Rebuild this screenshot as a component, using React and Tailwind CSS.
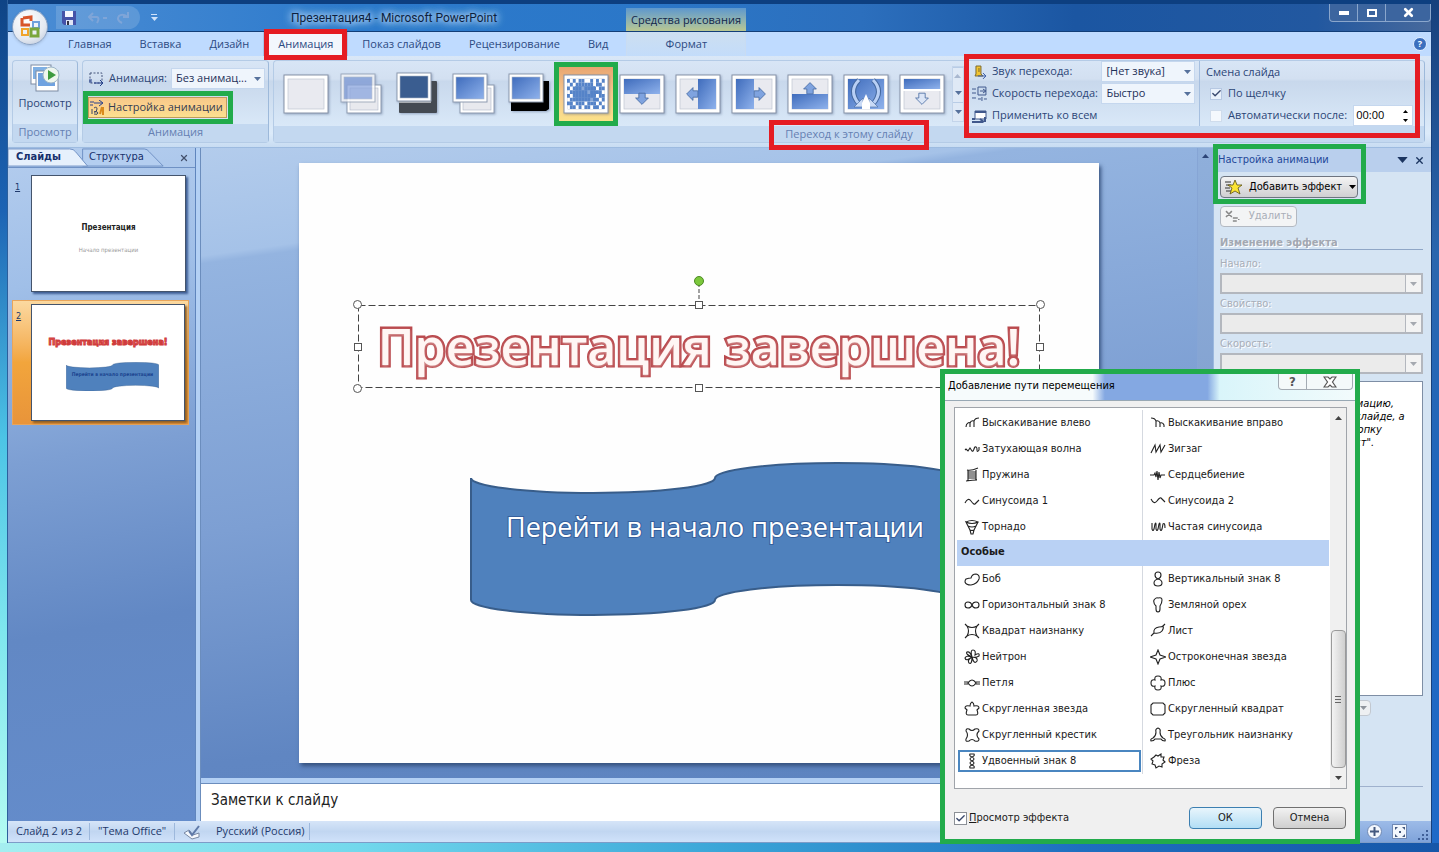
import { Check, X } from 'lucide-react'

const TABS = ['Главная', 'Вставка', 'Дизайн', 'Анимация', 'Показ слайдов', 'Рецензирование', 'Вид']

const UI = 'font-["Open_Sans","Noto_Sans",sans-serif]'
const TAHOMA = 'font-["DejaVu_Sans_Condensed","DejaVu_Sans",sans-serif]'

const TRANSITIONS = [
  'none', 'fade', 'fadeBlack', 'cut', 'cutBlack', 'dissolve',
  'wipeDown', 'wipeLeft', 'wipeRight', 'wipeUp', 'wheel', 'uncover',
]

// pairs of [left column, right column], as listed in the dialog
const LINE_PATHS = [
  [['Выскакивание влево', 'bounceLeft'], ['Выскакивание вправо', 'bounceRight']],
  [['Затухающая волна', 'decay'], ['Зигзаг', 'zigzag']],
  [['Пружина', 'spring'], ['Сердцебиение', 'heartbeat']],
  [['Синусоида 1', 'sine1'], ['Синусоида 2', 'sine2']],
  [['Торнадо', 'tornado'], ['Частая синусоида', 'sineFast']],
]

const SPECIAL_PATHS = [
  [['Боб', 'bean'], ['Вертикальный знак 8', 'eightV']],
  [['Горизонтальный знак 8', 'eightH'], ['Земляной орех', 'peanut']],
  [['Квадрат наизнанку', 'invSquare'], ['Лист', 'leaf']],
  [['Нейтрон', 'neutron'], ['Остроконечная звезда', 'pointStar']],
  [['Петля', 'loop'], ['Плюс', 'plus']],
  [['Скругленная звезда', 'roundStar'], ['Скругленный квадрат', 'roundSquare']],
  [['Скругленный крестик', 'roundCross'], ['Треугольник наизнанку', 'invTriangle']],
  [['Удвоенный знак 8', 'eightDouble'], ['Фреза', 'cutter']],
]

const PATHS = {
  bounceLeft: 'M2 12q0-3 2-4M6 12V8q-1-1-2 0M6 8q1-3 4-2v6M10 6q1-3 5-3',
  bounceRight: 'M1 3q4 0 5 3v6M6 6q3-1 4 2v4M10 8q3-1 4 2v2',
  decay: 'M1 9l1-1 2 2 2-3 2 3q1 1 2-2t2-2q1 0 1 3t2 0V6',
  zigzag: 'M1 12l4-8 1 7 4-7 1 7 4-7',
  spring: 'M3 3q4 1 11-2M4 5h8M4 7h8M4 9h8M4 11h8M2 14q7-1 11-1M4 3v11M12 3v10',
  heartbeat: 'M0 8h4l1-2 1 4 1-6 1 9 1-8 1 6 1-3h4',
  sine1: 'M1 10q3-6 6-2t4 3 4-4',
  sine2: 'M1 6q3 6 6 2t4-3 4 4',
  tornado: 'M2 3q6-3 12 0-6 3-12 0l2 4q4 2 8 0l2-4M4 7l2 4q2 1 4 0l2-4M6 11l1 4h2l1-4',
  sineFast: 'M2 4v6q1 3 2 0l1-5q1-2 1 0v5q1 3 2 0l1-5q1-2 1 0v5q1 3 2 0l1-5q2-2 2 4',
  bean: 'M2 8q3-1 5-1 1-4 5-4 4 1 3 5-2 5-8 6-5 0-6-3 0-2 1-3z',
  eightV: 'M8 8Q5 7 5 4 5 1 8 1t3 3q0 3-3 4-4 1-4 4 0 3 4 3t4-3q0-3-4-4z',
  eightH: 'M8 8Q7 5 4 5T1 8t3 3 4-3q1-3 4-3t3 3-3 3-4-3z',
  peanut: 'M6 9Q3 6 4 3q2-3 4-2 4-1 4 2 0 3-2 6v3q0 3-2 3t-2-3z',
  invSquare: 'M3 3q5 3 10 0-3 5 0 10-5-3-10 0 3-5 0-10zM3 3L1 1M13 3l2-2M3 13l-2 2M13 13l2 2',
  leaf: 'M1 13l3-3q-1-5 5-6 3 0 4-1l2-2M4 10q6 1 8-2 2-3 1-5',
  neutron: 'M8 8Q6 1 9 1t2 5q5-3 4 1-3 2-7 1 6 0 5 4-3 4-5-4 0 8-3 6-2-3 3-6-6 5-7 1 1-3 7-1-7-3-5-5 3-1 5 5z',
  loop: 'M0 7h5M11 7h5M0 9h5M11 9h5M4 8q4-6 8 0-4 6-8 0z',
  pointStar: 'M0 8l6-2 2-5 2 5 6 2-6 2-2 5-2-5z',
  plus: 'M5 5q-1-4 3-4t3 4q4-1 4 3t-4 3q1 4-3 4t-3-4q-4 1-4-3t4-3z',
  roundStar: 'M8 1q2 1 2 4 5-1 5 2l-2 2q2 5-1 5H4q-3 0-1-5L1 7q0-3 5-2 0-3 2-4z',
  roundSquare: 'M3 2h10l2 2v8l-2 2H3l-2-2V4z',
  roundCross: 'M2 4q0-3 3-2 3 3 6 0 4-1 4 2-4 4 0 8 0 3-4 2-3-3-6 0-4 1-3-2 3-4 0-8z',
  invTriangle: 'M8 1q3 1 2 4 0 4 3 6 3 1 2 3-3 0-4-2H5q-1 2-4 2-1-2 2-3 3-2 3-6Q5 2 8 1z',
  eightDouble: 'M8 4Q5 3 6 1h4q1 2-2 3-4 2 0 4 4-2 0-4M8 8q-4 2 0 4 4-2 0-4M8 12q-3 1-2 3h4q1-2-2-3',
  cutter: 'M6 2l2 1 3-2v3l3 0-1 3 2 2-3 2v3l-3-1-3 2-1-3-3-1 1-3-2-2 3-2z',
}

function PathIcon({ name }) {
  return (
    <svg viewBox="0 0 16 16" className="w-4 h-4 shrink-0" fill="none" stroke="#222" strokeWidth="1.1">
      <path d={PATHS[name]} />
    </svg>
  )
}

// coloured marker frame around a part of the window
function Marker({ className }) {
  return <span className={`absolute pointer-events-none z-10 border-[5px] ${className}`} />
}

function Caret({ className = 'text-[#56719c]' }) {
  return (
    <svg viewBox="0 0 7 4" className={`w-[7px] h-1 shrink-0 pointer-events-none ${className}`} fill="currentColor">
      <path d="M0 0h7L3.5 4z" />
    </svg>
  )
}

function TitleBar() {
  return (
    <header className="flex h-8 shrink-0 border-t-4 border-[#0d3f80] bg-[linear-gradient(90deg,#4c8dd4,#2c7acc_25%,#2b77c8_45%,#2c6fbd_60%,#1b56a2_75%,#2258a0_92%,#47699c)] border-b border-b-[#123e78]">
      <div className="flex items-center gap-3 ml-12 my-0.5 pl-1.5 w-[84px] rounded-r-full bg-white/15">
        <svg viewBox="0 0 14 14" className="w-3.5 h-3.5">
          <path d="M0 0h14v14H2L0 12z" fill="#4452a8" />
          <path d="M3 0h8v6H3z" fill="#f4f6ff" />
          <path d="M4 9h7v5H4z" fill="#dfe5f5" />
          <path d="M5 10h2v4H5z" fill="#334" />
        </svg>
        <svg viewBox="0 0 46 12" className="w-[46px] h-3" fill="none" stroke="#7fa5d8" strokeWidth="2">
          <path d="M1 5h8q3 1 0 6M5 1L1 5l4 4" />
          <path d="M15 6h4" />
          <path d="M34 11q-6-3-3-7 3-3 9 1M40 0v5h-5" />
        </svg>
      </div>
      <div className="flex flex-col items-center justify-center gap-0.5 w-4 ml-1.5 text-[#cfe2fa]">
        <span className="w-1.5 h-px bg-current" />
        <Caret className="text-[#cfe2fa]" />
      </div>
      <div className="relative flex-1">
        <h1 className='absolute left-[129px] top-1 text-[12px] leading-5 text-[#0d1f3d] whitespace-nowrap [text-shadow:0_0_6px_#bfdcfb,0_0_8px_#bfdcfb,0_0_10px_#bfdcfb] font-["Roboto","Noto_Sans",sans-serif]'>
          Презентация4 - Microsoft PowerPoint
        </h1>
        <div className={`absolute left-[464px] top-1 bottom-0 w-[120px] text-center text-[11px] leading-6 text-[#12264a] bg-gradient-to-b from-[#5d97cd] to-[#b9c790] ${UI}`}>
          Средства рисования
        </div>
      </div>
      <div className="flex h-[18px] text-white border border-t-0 border-[#8aa6cc] rounded-b-sm bg-[#3c659f]">
        <button aria-label="Свернуть" className="w-7 flex items-center justify-center border-r border-[#8aa6cc]">
          <span className="w-2.5 h-1 bg-white" />
        </button>
        <button aria-label="Развернуть" className="w-7 flex items-center justify-center border-r border-[#8aa6cc]">
          <span className="w-2.5 h-2 border-2 border-white" />
        </button>
        <button aria-label="Закрыть" className="w-11 flex items-center justify-center">
          <X size={13} strokeWidth={5} />
        </button>
      </div>
    </header>
  )
}

function OfficeButton() {
  return (
    <button aria-label="Office" className="absolute left-3 top-[9px] z-20 w-9 h-9 rounded-full border border-[#8ba3c4] bg-[radial-gradient(circle_at_40%_30%,#ffffff,#e4e9f1_60%,#b4c1d6)] shadow flex items-center justify-center">
      <svg viewBox="0 0 24 24" className="w-6 h-6" fill="none" strokeWidth="3">
        <path d="M5 3l8-1v4M12 10H4V3" stroke="#d8552a" />
        <path d="M15 7h6v6h-6z" stroke="#6fa0dc" strokeWidth="2" />
        <path d="M4 14h6v6H4z" stroke="#f0a42c" strokeWidth="2" />
        <path d="M13 14h7v7h-7z" stroke="#7aa63c" />
      </svg>
    </button>
  )
}

function RibbonTabs() {
  return (
    <nav className={`flex items-stretch h-6 shrink-0 pl-[46px] bg-[#bfdbff] text-[11px] text-[#2c4a82] ${UI}`}>
      {TABS.map(tab => (
        <button
          key={tab}
          className={`relative px-3.5 ${tab === 'Анимация' ? 'bg-[#f3f7fd] border border-b-0 border-[#a9c3e4]' : ''}`}
        >
          {tab}
          {tab === 'Анимация' && <Marker className="border-[#e51c23] left-0 right-0 -top-1 -bottom-1" />}
        </button>
      ))}
      <button className="ml-1 w-[120px] border-x border-[#c9dcf2] bg-gradient-to-b from-[#cddff0] to-[#c3dcfa]">Формат</button>
      <button aria-label="Справка" className="ml-auto mr-1 my-auto w-3.5 h-3.5 rounded-full bg-[#3b6fbe] border border-[#e3efff] text-white text-[9px] leading-3 font-bold">
        ?
      </button>
    </nav>
  )
}

function Group({ label, className = '', children }) {
  return (
    <section className={`flex flex-col rounded-sm border border-[#b4cbe6] border-r-[#9db9da] ${className}`}>
      <div className="flex-1 flex">{children}</div>
      <div className="relative h-[18px] text-center text-[11px] leading-4 text-[#6580b2] bg-[#c3d8f0]">{label}</div>
    </section>
  )
}

function Sheet({ x, y, fill }) {
  return (
    <g>
      <rect x={x} y={y} width="34" height="28" fill="#fff" stroke="#8e9bb0" />
      <rect x={x + 3} y={y + 3} width="28" height="22" fill={fill} stroke="#aeb8c8" strokeWidth=".6" />
    </g>
  )
}

const DISSOLVE = [
  '1010110010101', '0101111110110', '1011101111011', '0111111011110',
  '1011111111011', '0111111101101', '1101110111010', '0110101101101',
]

function Transition({ kind }) {
  const arrow = 'M-4 0h-4l8 8 8-8h-4v-6h-8z'
  const full = (
    <g>
      <rect x="1" y="3" width="44" height="38" fill="#fff" stroke="#8793a8" />
      <rect x="5" y="7" width="36" height="30" fill="#e9eaf0" stroke="#c0c6d2" strokeWidth=".7" />
    </g>
  )
  const arrowProps = { d: arrow, fill: '#7fa3df', stroke: '#44689f' }
  return (
    <svg viewBox="0 0 46 44" className="w-[46px] h-11 drop-shadow-[1px_1px_1px_rgba(60,80,120,0.4)]">
      <defs>
        <linearGradient id="tblue" x1="0" y1="0" x2="1" y2="1">
          <stop offset="0" stopColor="#3f6cbc" />
          <stop offset="1" stopColor="#8fb2ec" />
        </linearGradient>
      </defs>
      {kind === 'none' && full}
      {kind === 'fade' && <><Sheet x={8} y={13} fill="#e8e9ee" /><g opacity=".75"><Sheet x={2} y={2} fill="#8aa5de" /></g></>}
      {kind === 'fadeBlack' && <><rect x="4" y="9" width="38" height="32" rx="1" fill="#444a52" /><path d="M4 27h32v4H4z" fill="#a9adb2" /><Sheet x={2} y={1} fill="#3a5d90" /></>}
      {kind === 'cut' && <><Sheet x={9} y={13} fill="#e8e9ee" /><Sheet x={2} y={2} fill="url(#tblue)" /></>}
      {kind === 'cutBlack' && <><path d="M36 9h6v28l-3 2H4V29h32z" fill="#000" /><Sheet x={2} y={2} fill="url(#tblue)" /></>}
      {kind === 'dissolve' && (
        <>
          {full}
          <rect x="5" y="7" width="36" height="30" fill="#fff" />
          {DISSOLVE.map((row, r) =>
            [...row].map((c, i) =>
              c === '1' ? <rect key={`${r}-${i}`} x={4 + i * 2.9} y={7 + r * 3.75} width="2.9" height="3.75" fill="#5583c8" /> : null
            )
          )}
          <rect x="12" y="14" width="20" height="15" fill="#5583c8" opacity=".7" />
        </>
      )}
      {kind === 'wipeDown' && <>{full}<rect x="5" y="7" width="36" height="15" fill="url(#tblue)" /><path {...arrowProps} transform="translate(23 26) scale(.8)" /></>}
      {kind === 'wipeLeft' && <>{full}<rect x="23" y="7" width="18" height="30" fill="url(#tblue)" /><path {...arrowProps} transform="translate(18 22) rotate(90) scale(.8)" /></>}
      {kind === 'wipeRight' && <>{full}<rect x="5" y="7" width="18" height="30" fill="url(#tblue)" /><path {...arrowProps} transform="translate(28 22) rotate(-90) scale(.8)" /></>}
      {kind === 'wipeUp' && <>{full}<rect x="5" y="22" width="36" height="15" fill="url(#tblue)" /><path {...arrowProps} transform="translate(23 17) rotate(180) scale(.8)" /></>}
      {kind === 'uncover' && <>{full}<rect x="5" y="7" width="36" height="10" fill="url(#tblue)" /><path d="M2 18h42" stroke="#fff" strokeWidth="2" /><path {...arrowProps} fill="#dbe5f6" transform="translate(23 26) scale(.8)" /></>}
      {kind === 'wheel' && (
        <>
          {full}
          <rect x="5" y="7" width="36" height="30" fill="url(#tblue)" />
          <path d="M16 8q-11 11 0 24M30 8q11 11 0 24" fill="none" stroke="#44689f" strokeWidth="5" />
          <path d="M16 8q-11 11 0 24M30 8q11 11 0 24" fill="none" stroke="#b8cff5" strokeWidth="3" />
          <path d="M11 35h9v-9zM35 35h-9v-9z" fill="#c9daf6" stroke="#44689f" strokeWidth=".6" />
          <path d="M23 22l4 9v6h-8v-6z" fill="#fff" />
        </>
      )}
    </svg>
  )
}

function RibbonSelect({ id, value, className }) {
  return (
    <span className={`relative inline-flex items-center ${className}`}>
      <select id={id} defaultValue={value} className="appearance-none w-full h-[21px] pl-1 pr-4 bg-[#eff5fc] border border-[#c5d7ee] text-[11px] text-[#1d3058]">
        <option>{value}</option>
      </select>
      <span className="absolute right-1"><Caret /></span>
    </span>
  )
}

function MotionIcon() {
  return (
    <svg viewBox="0 0 17 16" className="w-[17px] h-4 shrink-0" fill="none" stroke="#47567c">
      <path d="M2 2h12v10H2z" strokeDasharray="2 1.5" />
      <path d="M1 9h3M1 11h3M6 12h9M12 9l3 3-3 3" stroke="#26418c" />
    </svg>
  )
}

function Ribbon() {
  return (
    <div className={`flex gap-1 h-[92px] shrink-0 pl-1 pr-1.5 pt-1 pb-1 text-[11px] text-[#2c4677] bg-[linear-gradient(#d9e7f7,#d3e0f1_25%,#c8d8ec_28%,#dcebfa_85%,#c8dcf2)] border-b border-[#9dbbe0] ${UI}`}>
      <Group label="Просмотр" className="w-[66px]">
        <button className="w-full flex flex-col items-center pt-0.5">
          <svg viewBox="0 0 30 30" className="w-[30px] h-[30px]">
            <rect x="1" y="2" width="20" height="19" fill="#fff" stroke="#7d8ba3" />
            <rect x="3" y="4" width="14" height="12" fill="#7fb0e4" />
            <rect x="6" y="8" width="22" height="20" fill="#fff" stroke="#7d8ba3" />
            <rect x="8" y="10" width="17" height="13" fill="#6fa2e0" />
            <circle cx="21" cy="12" r="8" fill="#eef6ee" stroke="#9db5c8" />
            <path d="M18 7l8 5-8 5z" fill="#3e9b3e" />
          </svg>
          <span className="leading-5">Просмотр</span>
        </button>
      </Group>

      <Group label="Анимация" className="w-[187px]">
        <div className="flex flex-col gap-2 pt-[7px] pl-[5px] w-full">
          <div className="flex items-center h-[21px]">
            <MotionIcon />
            <label htmlFor="anim" className="ml-1 w-[62px]">Анимация:</label>
            <RibbonSelect id="anim" value="Без анимац..." className="w-[94px]" />
          </div>
          <button className="relative flex items-center gap-0.5 h-[21px] w-[139px] bg-gradient-to-b from-[#f7c98a] via-[#fcd38d] to-[#fbe08f] border border-[#c09a5a] text-[#333b52] whitespace-nowrap">
            <svg viewBox="0 0 17 16" className="w-[17px] h-4 shrink-0" fill="none" stroke="#3b4668">
              <path d="M1 2h4M1 5h3M5 3h8M10 0l4 3-4 3" stroke="#26418c" />
              <path d="M5 8q3-2 3 1t-3 3q4-1 4 1t-4 1M3 9v5" />
              <path d="M13 7l-2 7M14 7v8" stroke="#d88a1c" strokeWidth="2" />
            </svg>
            Настройка анимации
            <Marker className="border-[#22ab4b] -inset-y-[7px] -left-1.5 -right-[7px]" />
          </button>
        </div>
      </Group>

      <Group
        className="flex-1"
        label={
          <span className="relative inline-block">
            Переход к этому слайду
            <Marker className="border-[#e51c23] -inset-x-4 -top-1.5 -bottom-2" />
          </span>
        }
      >
        <div className="flex items-center pl-1">
          {TRANSITIONS.map(kind => (
            <button
              key={kind}
              aria-label={kind}
              className={`relative w-14 h-14 flex items-center justify-center ${
                kind === 'dissolve' ? 'bg-gradient-to-b from-[#e8a571] via-[#f7c98f] to-[#fbe189] border border-[#b59a68]' : ''
              }`}
            >
              <Transition kind={kind} />
              {kind === 'dissolve' && <Marker className="border-[#22ab4b] -inset-[5px]" />}
            </button>
          ))}
          <div className="flex flex-col w-3 ml-0.5 divide-y divide-[#b8cce6] border border-[#c3d4ea] bg-[#dfe9f6]">
            <button aria-label="Выше" className="h-[18px] flex items-center justify-center rotate-180"><Caret className="text-[#a9b8d0]" /></button>
            <button aria-label="Ниже" className="h-[18px] flex items-center justify-center"><Caret /></button>
            <button aria-label="Ещё" className="h-[18px] flex items-center justify-center"><Caret /></button>
          </div>
        </div>

        <div className="relative flex flex-1 pl-2">
          <div className="flex flex-col gap-px w-[223px]">
            <div className="flex items-center h-[21px]">
              <svg viewBox="0 0 16 16" className="w-4 h-4 mr-1" fill="#f3c532" stroke="#7a6a30">
                <path d="M4 2h5v8l2 2H3l1-2z" />
                <path d="M7 4v4" />
                <path d="M6 12h8M11 9l3 3-3 3" fill="none" stroke="#3b5da6" />
              </svg>
              <label htmlFor="sound" className="w-[110px]">Звук перехода:</label>
              <RibbonSelect id="sound" value="[Нет звука]" className="w-[94px]" />
            </div>
            <div className="flex items-center h-[21px]">
              <svg viewBox="0 0 16 16" className="w-4 h-4 mr-1" fill="none" stroke="#40588c">
                <path d="M0 3h4M0 7h4M0 12h4M6 1h8v8H6zM8 5h6M11 3l3 2-3 2M6 13h3M12 13h3M10 11v4" />
              </svg>
              <label htmlFor="speed" className="w-[110px] whitespace-nowrap">Скорость перехода:</label>
              <RibbonSelect id="speed" value="Быстро" className="w-[94px]" />
            </div>
            <button className="flex items-center gap-1 h-[21px]">
              <svg viewBox="0 0 16 16" className="w-4 h-4" fill="none" stroke="#40588c">
                <path d="M3 3h11v8H3z" fill="#fff" />
                <path d="M3 4h11M0 11h3M0 14h11M8 11l4 3M13 9v5" strokeWidth="2" />
              </svg>
              Применить ко всем
            </button>
          </div>
          <div className="flex flex-col gap-px pl-2.5 ml-1 border-l border-[#a6bfdf] flex-1 max-w-[214px]">
            <span className="leading-[21px] -ml-1">Смена слайда</span>
            <label className="flex items-center gap-1.5 h-[21px]">
              <span className="relative flex">
                <input type="checkbox" defaultChecked className="appearance-none w-3 h-3 bg-[#e9f1fb] border border-[#b6c8e2]" />
                <Check size={11} strokeWidth={3} className="absolute left-px top-0 text-[#38486e] pointer-events-none" />
              </span>
              По щелчку
            </label>
            <div className="flex items-center gap-1.5 h-[21px]">
              <input id="auto" type="checkbox" className="appearance-none w-3 h-3 bg-[#f4f8fd] border border-[#cfdcec]" />
              <label htmlFor="auto" className="whitespace-nowrap">Автоматически после:</label>
              <span className="flex items-center flex-1 h-[21px] bg-white border border-[#c5d7ee]">
                <input aria-label="Время" defaultValue="00:00" className="w-10 pl-0.5 text-[11px] text-black bg-transparent" />
                <span className="flex flex-col gap-1.5 ml-auto mr-1">
                  <svg viewBox="0 0 5 3" className="w-[5px] h-[3px]"><path d="M0 3h5L2.5 0z" /></svg>
                  <svg viewBox="0 0 5 3" className="w-[5px] h-[3px]"><path d="M0 0h5L2.5 3z" /></svg>
                </span>
              </span>
            </div>
          </div>
          <Marker className="border-[#e51c23] left-0 right-1 -top-[7px] -bottom-[12px]" />
        </div>
      </Group>
    </div>
  )
}

// wave shaped banner, used on the slide and in its thumbnail
function Banner({ className }) {
  return (
    <svg viewBox="0 0 490 154" className={className} fill="#4f81bd" stroke="#385d8a" strokeWidth="2">
      <path d="M1 16A122 15 0 0 0 245 16A122 15 0 0 1 489 16V138A122 15 0 0 0 245 138A122 15 0 0 1 1 138Z" />
    </svg>
  )
}

function SlidesPane() {
  return (
    <aside className={`w-[188px] shrink-0 flex flex-col border-r border-[#5f85bd] bg-[linear-gradient(170deg,#b4cdee,#a0bfe8_20%,#7d9fd3_45%,#6288c4_70%,#648ccb)] ${TAHOMA}`}>
      <div className="relative flex items-center h-5 shrink-0 border-b border-[#6f91c4]">
        <svg viewBox="0 0 188 20" preserveAspectRatio="none" className="absolute inset-0 w-full h-full">
          <path d="M75 1h62q3 0 5 3l14 15H75z" fill="#b4cef0" stroke="#6f91c4" />
          <path d="M0 1h62q4 0 6 3l12 15H0z" fill="#e6f0fc" stroke="#6f91c4" />
        </svg>
        <button className="relative ml-2 w-[73px] text-left text-[11px] font-bold text-[#17306c]">Слайды</button>
        <button className="relative text-[11px] text-[#17306c]">Структура</button>
        <button aria-label="Закрыть область" className="relative ml-auto mr-1.5 text-[#44506c]"><X size={10} strokeWidth={3} /></button>
      </div>
      <ol className="flex flex-col pt-1 pl-1 pr-1.5 text-[9px] text-[#203a6c]">
        <li className="flex gap-2 p-[3px] pb-2">
          <span className="w-2 pt-1.5 underline">1</span>
          <div className="flex flex-col items-center justify-center gap-3 w-[155px] h-[117px] bg-white border border-[#44546c] shadow-[2px_2px_2px_#3f5f94]">
            <p className="text-[8px] leading-3 font-bold text-[#222] pt-2">Презентация</p>
            <p className="text-[6px] leading-2 text-[#999]">Начало презентации</p>
          </div>
        </li>
        <li className="flex gap-2 p-[3px] bg-gradient-to-b from-[#fbd9a0] via-[#f2a53c] to-[#e8943a] border border-[#e9a55a]">
          <span className="w-[7px] pt-1.5 underline">2</span>
          <div className="relative w-[155px] h-[117px] bg-white border border-[#44546c] shadow-[2px_2px_2px_#8f5f24]">
            <p className="pt-[31px] text-center text-[9px] leading-3 font-bold text-[#ee6a66] [-webkit-text-stroke:1px_#cf3b3b] whitespace-nowrap">Презентация завершена!</p>
            <div className="relative w-[93px] ml-[34px] mt-3.5">
              <Banner className="w-full" />
              <p className="absolute inset-x-0 top-2 text-center text-[5px] leading-2 font-bold text-[#1c4590] whitespace-nowrap">Перейти в начало презентации</p>
            </div>
          </div>
        </li>
      </ol>
    </aside>
  )
}

const HANDLES = [
  'rounded-full -left-[5px] -top-[5px]',
  'rounded-full -right-[5px] -top-[5px]',
  'rounded-full -left-[5px] -bottom-[5px]',
  'rounded-full -right-[5px] -bottom-[5px]',
  'left-1/2 -translate-x-1/2 -top-1',
  'left-1/2 -translate-x-1/2 -bottom-1',
  'top-1/2 -translate-y-1/2 -left-1',
  'top-1/2 -translate-y-1/2 -right-1',
]

function Slide() {
  return (
    <div className="relative w-[800px] h-[600px] shrink-0 bg-[#fefefe] shadow-[2px_3px_4px_#36527f]">
      <div className="absolute left-[59px] top-[142px] w-[682px] h-[83px]">
        <svg className="absolute inset-0 w-full h-full overflow-visible" fill="none" stroke="#444">
          <rect x="0.5" y="0.5" width="681" height="82" strokeDasharray="7 3" />
          <path d="M341 0v-20" strokeDasharray="4 2" />
        </svg>
        <span className="absolute left-1/2 -translate-x-1/2 -top-[29px] w-2.5 h-2.5 rounded-full bg-[#7cc83c] border border-[#4c8a24]" />
        {HANDLES.map(h => (
          <span key={h} className={`absolute bg-white border border-[#555] ${h} ${h.includes('rounded') ? 'w-[9px] h-[9px]' : 'w-2 h-2'}`} />
        ))}
        <p className='relative h-full flex items-center justify-center whitespace-nowrap text-[50px] font-semibold text-[#fff6f4] [paint-order:stroke_fill] [-webkit-text-stroke:5px_#b9484c] [text-shadow:0_1px_3px_#dba5a5] font-["Open_Sans","Noto_Sans",sans-serif]'>
          Презентация завершена!
        </p>
      </div>
      <div className="absolute left-[171px] top-[299px] w-[490px]">
        <Banner className="w-full block" />
        <p className='absolute left-0 top-[43px] w-full text-center whitespace-nowrap text-[27px] leading-11 text-white [paint-order:stroke_fill] [-webkit-text-stroke:2px_#365f9c] font-["Open_Sans","Noto_Sans",sans-serif]'>
          Перейти в начало презентации
        </p>
      </div>
    </div>
  )
}

function Editor() {
  return (
    <main className="flex-1 min-w-0 flex flex-col">
      <div className="flex-1 flex bg-[linear-gradient(172deg,#b3ccec,#a5c2e8_14%,#94b4e0_15%,#7d9fd3_50%,#6086c2_80%,#5c83bf)]">
        <div className="flex-1 min-w-0 flex items-center justify-center overflow-hidden">
          <Slide />
        </div>
        <div className="w-4 shrink-0 flex justify-center pt-1.5 bg-[linear-gradient(#8fafdb,#7391c2)] border-l border-[#86a5d5]">
          <span className="rotate-180 h-fit flex"><Caret className="text-[#2c4477]" /></span>
        </div>
      </div>
      <div className="h-1.5 shrink-0 bg-[#b3d0f4] border-b border-[#6b8dbd]" />
      <textarea
        aria-label="Заметки"
        defaultValue="Заметки к слайду"
        className={`h-[37px] shrink-0 resize-none bg-white px-2.5 py-1 text-[15px] leading-6 text-[#222] ${TAHOMA}`}
      />
    </main>
  )
}

function PaneSelect({ id, label }) {
  return (
    <div className="flex flex-col">
      <label htmlFor={id} className="leading-[19px] text-[#a9aeb8] [text-shadow:1px_1px_0_#fff]">{label}</label>
      <span className="relative flex">
        <select id={id} disabled className="appearance-none w-full h-[21px] bg-[#ebebeb] border-2 border-[#b3b7be]" />
        <span className="absolute right-0.5 top-0.5 w-4 h-[17px] flex items-center justify-center bg-[#f3f3f3] border-l border-[#b3b7be]">
          <Caret className="text-[#a5a9b0]" />
        </span>
      </span>
    </div>
  )
}

function AnimationPane() {
  return (
    <aside className={`relative w-[218px] shrink-0 flex flex-col bg-[#d5e4f3] border-l border-[#9bb8de] text-[11px] ${TAHOMA}`}>
      <div className="flex items-center gap-2 h-6 shrink-0 pl-1 pr-1.5 bg-[#b9cfed] text-[#24489a]">
        <h2 className="flex-1">Настройка анимации</h2>
        <Caret className="text-[#1c3560] scale-150" />
        <button aria-label="Закрыть область" className="text-[#1c3560]"><X size={11} strokeWidth={3} /></button>
      </div>
      <Marker className="border-[#22ab4b] -left-px -top-1 w-[153px] h-[60px]" />
      <div className="flex-1 flex flex-col pl-1.5 pr-2 pt-1">
        <button className="flex items-center gap-[7px] h-[22px] w-[138px] px-1 border border-[#6d7480] rounded-sm bg-gradient-to-b from-[#f4f4f4] to-[#cfcfd2] text-black whitespace-nowrap">
          <svg viewBox="0 0 17 16" className="w-[17px] h-4 shrink-0">
            <path d="M0 3h6M1 6h5M0 9h5M1 12h5" stroke="#333" />
            <path d="M10 1l2 5h5l-4 3 2 6-5-3-5 3 2-6-4-3h5z" fill="#fbe434" stroke="#5c5210" strokeWidth=".8" />
          </svg>
          Добавить эффект
          <Caret className="text-black" />
        </button>
        <button disabled className="flex items-center gap-2 mt-2 h-[21px] w-[77px] px-1 border border-[#b3b9c2] rounded-sm bg-[#f3f4f5] text-[#a9aeb8]">
          <svg viewBox="0 0 16 14" className="w-4 h-3.5" stroke="#888" fill="none" strokeWidth="1.5">
            <path d="M1 1l6 6M7 1L1 7M8 8h5M8 11h4M14 9v1" />
          </svg>
          Удалить
        </button>
        <h3 className="mt-2 leading-[15px] h-[15px] border-b border-[#8fa6c6] font-bold text-[#a3a8b2] [text-shadow:1px_1px_0_#fff]">Изменение эффекта</h3>
        <div className="flex flex-col mt-1">
          <PaneSelect id="start" label="Начало:" />
          <PaneSelect id="prop" label="Свойство:" />
          <PaneSelect id="paneSpeed" label="Скорость:" />
        </div>
        <div className="mt-[7px] h-[315px] border border-[#7e8ea5] bg-white pt-[15px] text-center italic leading-[13px] text-black whitespace-nowrap">
          Чтобы добавить анимацию,<br />
          выделите элемент на слайде, а<br />
          затем нажмите кнопку<br />
          "Добавить эффект".
        </div>
        <div className="flex justify-end pr-[52px] mt-1">
          <button aria-label="Ниже" className="w-4 h-4 rounded-sm border border-[#c2c8d0] bg-[#eef0f2] flex items-center justify-center"><Caret className="text-[#8f949c]" /></button>
        </div>
        <div className="mt-auto mb-[34px] border-t border-[#9fb1cd]" />
      </div>
    </aside>
  )
}

function PathCell({ item, selected }) {
  const [label, icon] = item
  return (
    <button
      className={`flex items-center gap-0.5 flex-1 min-w-0 px-1 my-0.5 mx-px text-left whitespace-nowrap border-2 ${
        selected ? 'border-[#4a86c0]' : 'border-transparent'
      }`}
    >
      <PathIcon name={icon} />
      <span>{label}</span>
    </button>
  )
}

function PathRows({ rows }) {
  return rows.map(([left, right]) => (
    <div key={left[0]} className="flex h-[26px]">
      <div className="flex w-[186px] border-r border-[#d5d9e0]"><PathCell item={left} selected={left[1] === 'eightDouble'} /></div>
      <div className="flex flex-1"><PathCell item={right} /></div>
    </div>
  ))
}

function MotionPathDialog() {
  return (
    <div role="dialog" aria-label="Добавление пути перемещения" className={`absolute right-[79px] bottom-2 z-30 w-[420px] flex flex-col border-[5px] border-[#22ab4b] bg-[#f0f0f0] text-[11px] text-[#1a1a1a] ${TAHOMA}`}>
      <div className="flex items-start h-[27px] pl-[3px] bg-[linear-gradient(90deg,#f6fbfc_36%,#84a8e2_39%,#84a8e2_64%,#d9f5fa_67%,#f2fbfc)] border-b border-[#98a8b4]">
        <h2 className="flex-1 leading-6 text-black">Добавление пути перемещения</h2>
        <div className="flex h-4 mr-0.5 border border-t-0 border-[#a3abb3] rounded-b bg-[#f4f9fa]">
          <button aria-label="Справка" className="w-7 border-r border-[#a3abb3] text-[13px] font-bold leading-3 text-[#555]">?</button>
          <button aria-label="Закрыть" className="w-[45px] flex items-center justify-center">
            <svg viewBox="0 0 14 12" className="w-3.5 h-3" fill="#fff" stroke="#555" strokeWidth="1.200">
              <path d="M1 1h4l2 2 2-2h4L9.500 6l3.500 5H9L7 9l-2 2H1l3.500-5z" />
            </svg>
          </button>
        </div>
      </div>
      <div className="flex ml-[9px] mr-2 mt-1.5 h-[382px] border border-[#a0a4aa] bg-white">
        <div className="flex-1 pl-0.5 pt-0.5">
          <PathRows rows={LINE_PATHS} />
          <h3 className="h-[26px] pl-1 leading-6 font-bold bg-[#b9d1f4]">Особые</h3>
          <PathRows rows={SPECIAL_PATHS} />
        </div>
        <div className="flex flex-col items-center w-4 ml-px bg-[#f0f0f0] py-2">
          <span className="rotate-180 flex"><Caret className="text-[#444]" /></span>
          <div className="mt-auto mb-2 w-[15px] h-[138px] border border-[#9a9a9a] rounded-sm bg-gradient-to-r from-[#f3f3f3] to-[#cfcfcf] flex flex-col items-center justify-center gap-0.5">
            <span className="w-1.5 h-px bg-[#666]" />
            <span className="w-1.5 h-px bg-[#666]" />
            <span className="w-1.5 h-px bg-[#666]" />
          </div>
          <Caret className="text-[#444]" />
        </div>
      </div>
      <div className="flex items-center gap-[11px] px-[9px] pt-[18px] pb-2.5">
        <label className="flex items-center gap-0.5 flex-1">
          <span className="relative flex">
            <input type="checkbox" defaultChecked className="appearance-none w-[13px] h-[13px] bg-white border border-[#8c9096]" />
            <Check size={11} strokeWidth={3} className="absolute left-px top-px text-[#3b4a6e] pointer-events-none" />
          </span>
          <span><u>П</u>росмотр эффекта</span>
        </label>
        <button className="w-[73px] h-[22px] border border-[#3c7fb1] rounded-sm bg-gradient-to-b from-[#e8f5fc] to-[#b2def5]">ОК</button>
        <button className="w-[73px] h-[22px] border border-[#707070] rounded-sm bg-gradient-to-b from-[#f2f2f2] to-[#cfcfcf]">Отмена</button>
      </div>
    </div>
  )
}

function StatusBar() {
  return (
    <footer className={`flex items-center h-[22px] shrink-0 text-[11px] text-[#1f3a6c] bg-gradient-to-b from-[#d6e5f8] via-[#c1d6f1] to-[#d0e2fa] border-b border-[#7d9cc8] ${UI}`}>
      <span className="w-[82px] pl-2 border-r border-[#9db8dc] whitespace-nowrap">Слайд 2 из 2</span>
      <span className="w-[85px] pl-2 border-r border-[#9db8dc] whitespace-nowrap">"Тема Office"</span>
      <span className="w-[41px] pl-2">
        <svg viewBox="0 0 18 16" className="w-[18px] h-4" fill="#f5f8fd" stroke="#7888a4">
          <path d="M1 9l5-3 4 5 6-2v4l-7 2z" />
          <path d="M6 7l3 4 7-9" fill="none" stroke="#5f79a8" strokeWidth="2" />
        </svg>
      </span>
      <span className="pr-1 border-r border-[#9db8dc] whitespace-nowrap">Русский (Россия)</span>
      <span className="ml-auto flex items-center gap-2.5 h-full pl-3 pr-0.5 bg-gradient-to-b from-[#9dbbe8] to-[#7fa3da]">
        <button aria-label="Увеличить" className="w-[15px] h-[15px] rounded-full bg-[#f3f7fd] border border-[#7089b4] flex items-center justify-center">
          <svg viewBox="0 0 9 9" className="w-[9px] h-[9px]" stroke="#44597f" strokeWidth="2"><path d="M4.500 0v9M0 4.500h9" /></svg>
        </button>
        <button aria-label="Вписать" className="w-[15px] h-[15px] bg-[#f3f7fd] border border-[#7089b4] flex items-center justify-center">
          <svg viewBox="0 0 12 12" className="w-3 h-3" fill="#44597f"><path d="M1 1h3L1 4zM11 1v3L8 1zM1 11V8l3 3zM11 11H8l3-3zM5 5h2v2H5z" /></svg>
        </button>
        <svg viewBox="0 0 12 12" className="w-3 h-3 mt-1.5" fill="#3f5f98">
          <path d="M9 1h2v2H9zM9 5h2v2H9zM9 9h2v2H9zM5 5h2v2H5zM5 9h2v2H5zM1 9h2v2H1z" />
        </svg>
      </span>
    </footer>
  )
}

export default function App() {
  return (
    <div className="relative flex flex-col h-screen overflow-hidden bg-[linear-gradient(90deg,#a5eef0,#72d8ec_25%,#3ba6d8_50%,#1e6fc0_75%,#1656a8)]">
      <OfficeButton />
      <div className="flex flex-1 min-h-0">
        <div className="w-2 shrink-0 border-r border-[#2c5f9c] bg-[linear-gradient(#0f4486,#1c63b4_25%,#4cc4e6_52%,#7fe6ee_75%,#b4fbf2)]" />
        <div className="flex-1 min-w-0 flex flex-col">
          <TitleBar />
          <RibbonTabs />
          <Ribbon />
          <div className="flex flex-1 min-h-0">
            <SlidesPane />
            <div className="w-[5px] shrink-0 bg-[#b3d0f4] border-r border-[#6b8dbd]" />
            <Editor />
            <AnimationPane />
          </div>
          <StatusBar />
        </div>
        <div className="w-2 shrink-0 border-l border-[#17407c] bg-[linear-gradient(#17407c,#2b66ae_30%,#1f66be_60%,#1f6ac8)]" />
      </div>
      <div className="h-[9px] shrink-0" />
      <MotionPathDialog />
    </div>
  )
}
